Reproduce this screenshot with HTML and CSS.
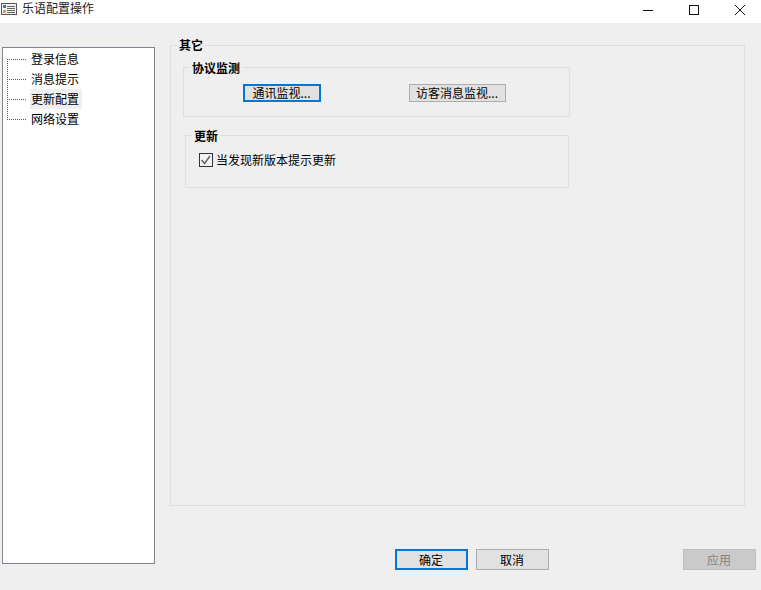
FILE: index.html
```html
<!DOCTYPE html>
<html lang="zh-CN">
<head>
<meta charset="utf-8">
<title>乐语配置操作</title>
<link rel="stylesheet" href="styles.css">
</head>
<body>
<div class="window">
  <header class="titlebar">
    <svg class="app-icon" width="16" height="12" viewBox="0 0 16 12">
      <rect x="0.5" y="0.5" width="15" height="11" fill="#f4f4f4" stroke="#555"/>
      <rect x="2" y="2" width="3" height="3" fill="#2b7fd0"/>
      <rect x="2" y="7" width="3" height="3" fill="#e8a13a"/>
      <path d="M6 3.5h8M6 5.5h8M6 7.5h8M6 9.5h8" stroke="#666"/>
    </svg>
    <span class="title">乐语配置操作</span>
    <div class="caption">
      <svg class="cap-btn" width="46" height="16" viewBox="0 0 46 16"><path d="M18 9.5h10" stroke="#111"/></svg>
      <svg class="cap-btn" width="46" height="16" viewBox="0 0 46 16"><rect x="18.5" y="4.5" width="9" height="9" fill="none" stroke="#111"/></svg>
      <svg class="cap-btn" width="46" height="16" viewBox="0 0 46 16"><path d="M18 4l10 10M28 4l-10 10" stroke="#111"/></svg>
    </div>
  </header>
  <main class="body">
    <nav class="tree">
      <div class="row"><span class="branch branch-first"></span><span class="label">登录信息</span></div>
      <div class="row"><span class="branch"></span><span class="label">消息提示</span></div>
      <div class="row"><span class="branch"></span><span class="label label-selected">更新配置</span></div>
      <div class="row"><span class="branch"></span><span class="label">网络设置</span></div>
    </nav>
    <div class="right">
      <section class="group outer">
        <h2 class="legend legend-outer">其它</h2>
        <section class="group monitor">
          <h3 class="legend legend-monitor">协议监测</h3>
          <div class="monitor-buttons">
            <button class="btn btn-default btn-comm" type="button">通讯监视...</button>
            <button class="btn btn-visitor" type="button">访客消息监视...</button>
          </div>
        </section>
        <section class="group update">
          <h3 class="legend legend-update">更新</h3>
          <label class="check">
            <svg class="check-box" width="14" height="14" viewBox="0 0 14 14">
              <rect x="0.5" y="0.5" width="13" height="13" fill="#f4f4f4" stroke="#333"/>
              <path d="M2.5 7l3 3.5L11 3" fill="none" stroke="#666" stroke-width="1.6"/>
            </svg>
            <span>当发现新版本提示更新</span>
          </label>
        </section>
      </section>
      <footer class="actions">
        <button class="btn btn-default btn-action" type="button">确定</button>
        <button class="btn btn-action" type="button">取消</button>
        <button class="btn btn-action btn-disabled" type="button" disabled>应用</button>
      </footer>
    </div>
  </main>
</div>
</body>
</html>
```
FILE: styles.css
```css
* { box-sizing: border-box; }
html, body { margin: 0; padding: 0; }
body {
  width: 761px;
  height: 590px;
  overflow: hidden;
  background: #efefef;
  color: #000;
  font: 12px/16px "Noto Sans CJK SC", "Liberation Sans", sans-serif;
}
.window { display: flex; flex-direction: column; height: 590px; }

.titlebar {
  display: flex;
  align-items: center;
  flex: none;
  height: 23px;
  padding-left: 1px;
  background: #fff;
}
.app-icon { flex: none; margin: -5px 5px 0 0; }
.title { margin-top: -7px; color: #222; }
.caption { display: flex; margin: -6px -2px 0 auto; }
.cap-btn { display: block; }

.body { display: flex; flex: 1; align-items: flex-start; }

.tree {
  flex: none;
  width: 153px;
  height: 517px;
  margin: 24px 0 0 2px;
  padding-top: 1px;
  background: #fff;
  border: 1px solid #82838f;
}
.row { display: flex; height: 20px; padding-left: 4px; }
.branch {
  flex: none;
  align-self: flex-start;
  width: 19px;
  height: 21px;
  margin-top: -10px;
  border-left: 1px dotted #555;
  border-bottom: 1px dotted #555;
}
.branch-first { height: 11px; margin-top: 0; border-left-color: transparent; }
.label { margin-left: 4px; padding: 2px 1px; width: 52px; line-height: 16px; white-space: nowrap; }
.label-selected { background: #efefef; }

.right { flex: none; width: 586px; margin: 22px 0 0 15px; }
.group { border: 1px solid #dfdfdf; }
.outer { width: 575px; height: 461px; padding: 21px 0 0 12px; }
.legend {
  width: max-content;
  margin: 0;
  padding: 0 2px;
  background: #efefef;
  font-size: 12px;
  line-height: 16px;
  font-weight: 700;
}
.legend-outer { margin: -30px 0 0 -6px; }
.monitor { width: 387px; height: 50px; margin-top: 14px; }
.legend-monitor { margin: -8px 0 0 6px; }
.monitor-buttons { display: flex; margin: 8px 0 0 59px; gap: 88px; }
.update { width: 384px; height: 53px; margin: 18px 0 0 2px; }
.legend-update { margin: -8px 0 0 6px; }
.check { display: flex; align-items: center; gap: 3px; margin: 8px 0 0 13px; }
.check-box { flex: none; display: block; }

.btn {
  display: block;
  margin: 0;
  padding: 0 1px 1px 0;
  height: 18px;
  background: #e1e1e1;
  border: 1px solid #adadad;
  border-radius: 0;
  color: #000;
  font: inherit;
  line-height: 14px;
}
.btn-default { border: 2px solid #0078d7; }
.btn-comm { width: 78px; }
.btn-visitor { width: 97px; }

.actions { display: flex; gap: 8px; margin-top: 43px; padding-left: 225px; }
.btn-action { width: 73px; height: 21px; padding-bottom: 0; }
.btn-disabled {
  margin-left: auto;
  background: #cacaca;
  border-color: #bfbfbf;
  color: #838383;
}
```
